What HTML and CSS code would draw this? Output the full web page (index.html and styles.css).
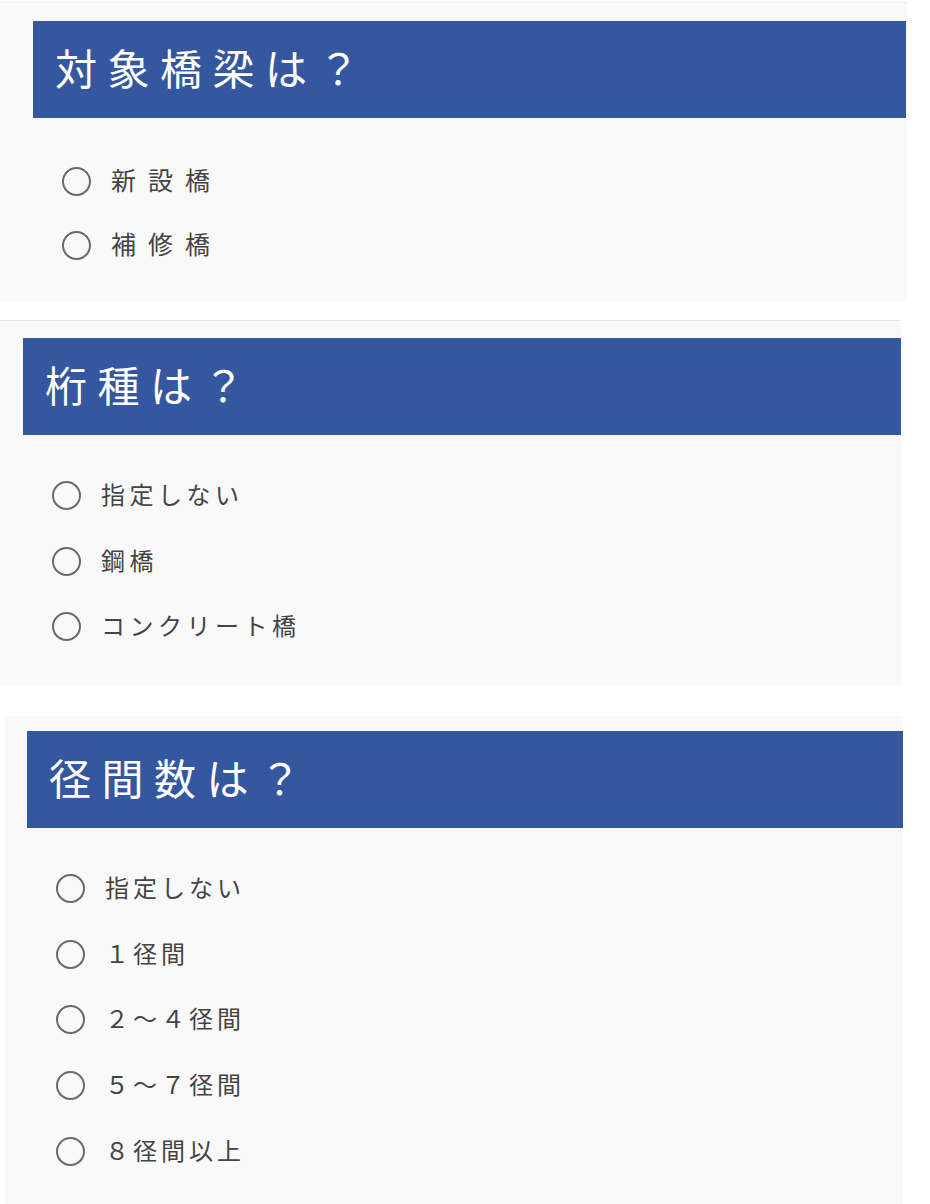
FILE: index.html
```html
<!DOCTYPE html>
<html lang="ja">
<head>
    <meta charset="UTF-8">
    <meta name="viewport" content="width=device-width, initial-scale=1.0">
    <title>橋梁の条件</title>
    <link rel="stylesheet" href="styles.css">
</head>
<body>

<section class="question q-target">
    <h2 class="question-title">対象橋梁は？</h2>
    <div class="options">
        <label class="option"><input type="radio" name="target" value="new"><span>新設橋</span></label>
        <label class="option"><input type="radio" name="target" value="repair"><span>補修橋</span></label>
    </div>
</section>

<section class="question q-girder">
    <h2 class="question-title">桁種は？</h2>
    <div class="options">
        <label class="option"><input type="radio" name="girder" value="none"><span>指定しない</span></label>
        <label class="option"><input type="radio" name="girder" value="steel"><span>鋼橋</span></label>
        <label class="option"><input type="radio" name="girder" value="concrete"><span>コンクリート橋</span></label>
    </div>
</section>

<section class="question q-span">
    <h2 class="question-title">径間数は？</h2>
    <div class="options">
        <label class="option"><input type="radio" name="span" value="none"><span>指定しない</span></label>
        <label class="option"><input type="radio" name="span" value="1"><span>１径間</span></label>
        <label class="option"><input type="radio" name="span" value="2-4"><span>２～４径間</span></label>
        <label class="option"><input type="radio" name="span" value="5-7"><span>５～７径間</span></label>
        <label class="option"><input type="radio" name="span" value="8"><span>８径間以上</span></label>
    </div>
</section>

</body>
</html>
```

FILE: styles.css
```css
body {
    margin: 0;
    background-color: #ffffff;
    font-family: "Noto Sans CJK JP", "Noto Sans", sans-serif;
    color: #444;
}

.question {
    background-color: #f9f9f9;
}

.question-title {
    margin: 0;
    height: 97px;
    display: flex;
    align-items: center;
    padding: 0 0 6px 22px;
    box-sizing: border-box;
    background-color: #3557a0;
    color: #ffffff;
    font-size: 42px;
    font-weight: 400;
    letter-spacing: 10.5px;
}

.options {
    display: flex;
    flex-direction: column;
}

.option {
    display: flex;
    align-items: center;
    gap: 20px;
    cursor: pointer;
}

.option span {
    margin-top: -4px;
}

.option input[type="radio"] {
    appearance: none;
    -webkit-appearance: none;
    margin: 0;
    width: 29px;
    height: 29px;
    border: 2.5px solid #6a6a6a;
    border-radius: 50%;
    box-sizing: border-box;
    background: transparent;
    flex: none;
}

.option input[type="radio"]:checked {
    background: radial-gradient(circle, #6a6a6a 40%, transparent 45%);
}

/* first block */
.q-target {
    width: 907px;
    margin-top: 2px;
    padding-top: 18px;
    border-top: 1px solid #f0f0f0;
}

.q-target .question-title {
    margin-left: 33px;
    margin-right: 1px;
}

.q-target .options {
    padding: 31px 0 24px 62px;
}

.q-target .option {
    height: 64px;
    font-size: 25px;
    letter-spacing: 12px;
}

/* second block */
.q-girder {
    width: 901px;
    margin-top: 19px;
    padding-top: 17px;
    border-top: 1px solid #e6e6e6;
}

.q-girder .question-title {
    margin-left: 23px;
}

.q-girder .options {
    padding: 28px 0 26px 52px;
}

.q-girder .option {
    height: 65.5px;
    font-size: 24px;
    letter-spacing: 4.5px;
}

/* third block */
.q-span {
    width: 898px;
    margin: 30px 0 0 5px;
    padding-top: 15px;
    padding-bottom: 20px;
}

.q-span .question-title {
    margin-left: 22px;
}

.q-span .options {
    padding: 28px 0 0 51px;
}

.q-span .option {
    height: 65.75px;
    font-size: 24px;
    letter-spacing: 4px;
}
```
